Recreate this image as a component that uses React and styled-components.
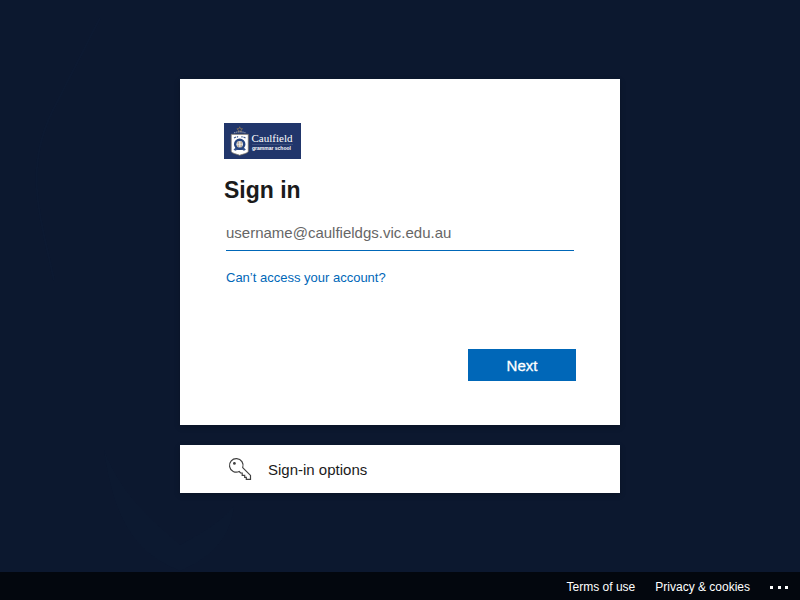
import React from "react";
import styled, { createGlobalStyle } from "styled-components";

const GlobalStyle = createGlobalStyle`
  *, *::before, *::after { box-sizing: border-box; }
  body {
    margin: 0;
    background: #0c182f;
    color: #1b1b1b;
    font-family: "Liberation Sans", Arial, sans-serif;
    font-size: 15px;
    line-height: 20px;
  }
`;

const Page = styled.div`
  position: relative;
  isolation: isolate;
  display: flex;
  flex-direction: column;
  min-height: 100vh;
`;

const Backdrop = styled.svg`
  position: absolute;
  inset: 0;
  z-index: -1;
  width: 100%;
  height: 100%;
`;

const Main = styled.main`
  flex: 1;
  display: flex;
  flex-direction: column;
  align-items: center;
  justify-content: center;
  gap: 20px;
`;

const Card = styled.form`
  display: flex;
  flex-direction: column;
  width: 100%;
  max-width: 440px;
  padding: 44px;
  background: #fff;
  box-shadow: 0 2px 6px rgba(0, 0, 0, 0.2);
`;

const Logo = styled.svg`
  display: block;
  width: 77px;
  height: 36px;
`;

const Title = styled.h1`
  margin: 17px 0 0;
  font-size: 23px;
  font-weight: 700;
  line-height: 28px;
`;

const Fields = styled.div`
  display: flex;
  flex-direction: column;
  align-items: flex-start;
  gap: 17px;
  margin-top: 11px;
  padding: 0 2px;
`;

const TextField = styled.input`
  width: 100%;
  height: 36px;
  padding: 0;
  border: 0;
  border-bottom: 1px solid #0067b8;
  border-radius: 0;
  outline: 0;
  background: transparent;
  color: inherit;
  font: inherit;
  &::placeholder { color: #666; opacity: 1; }
`;

const TextLink = styled.a`
  color: #0067b8;
  font-size: 13px;
  text-decoration: none;
  &:hover { text-decoration: underline; }
`;

const Actions = styled.div`
  display: flex;
  justify-content: flex-end;
  margin-top: 61px;
`;

const PrimaryButton = styled.button`
  min-width: 108px;
  height: 32px;
  padding: 2px 12px 0;
  border: 0;
  background: #0067b8;
  color: #fff;
  font: inherit;
  -webkit-text-stroke: 0.3px #fff;
  cursor: pointer;
  &:hover { background: #005da6; }
`;

const OptionsButton = styled.button`
  display: flex;
  align-items: center;
  gap: 16px;
  width: 100%;
  max-width: 440px;
  height: 48px;
  padding: 0 48px;
  border: 0;
  background: #fff;
  box-shadow: 0 2px 6px rgba(0, 0, 0, 0.2);
  color: inherit;
  font: inherit;
  text-align: left;
  cursor: pointer;
`;

const OptionsLabel = styled.span`
  padding-top: 2px;
`;

const Icon = styled.svg`
  display: block;
  width: 24px;
  height: 24px;
`;

const Footer = styled.footer`
  display: flex;
  align-items: center;
  justify-content: flex-end;
  gap: 20px;
  height: 28px;
  padding: 0 10px;
  background: rgba(0, 0, 0, 0.7);
`;

const FooterLink = styled.a`
  padding-top: 2px;
  color: #fff;
  font-size: 12px;
  text-decoration: none;
`;

const MoreButton = styled.button`
  display: flex;
  align-items: center;
  padding: 2px 0 0;
  border: 0;
  background: transparent;
  cursor: pointer;
`;

const Dots = styled.svg`
  display: block;
  width: 20px;
  height: 6px;
`;

function SchoolLogo() {
  return (
    <Logo viewBox="0 0 77 36" role="img" aria-label="Caulfield grammar school">
      <rect width="77" height="36" fill="#21366b" />
      <path d="m15.7 3.8.8 1.9 2 .1-1.6 1.3.6 2-1.8-1.1-1.7 1.1.5-2-1.6-1.3 2.1-.1z" fill="none" stroke="#8a7454" strokeWidth=".8" />
      <path d="M10 9.8q5.7-1.8 11.5 0" fill="none" stroke="#9ba4ba" strokeWidth="1.1" strokeDasharray="1.4 .7" />
      <path d="M7.2 11.3h17.1v17.2c-1.2 2.1-5.4 2.5-8.6 3.8-3.2-1.3-7.3-1.7-8.5-3.8z" fill="#fff" stroke="#756f66" strokeWidth=".8" />
      <path d="m10 15 2-1m7.5 0 2 1M13 13.5l1 .8m3.5 0 1-.8" stroke="#3d5689" strokeWidth="1.2" />
      <path d="m9.5 26.8 2-2.3h8.4l2 2.3-2 1-1.3-.7h-5.8l-1.3.7z" fill="#3c568d" />
      <circle cx="15.7" cy="21.3" r="4.5" fill="#dcdde1" stroke="#26447f" strokeWidth="2.5" />
      <path d="M14.2 18.5v5.7m3-5.7v5.7" stroke="#b5a184" strokeWidth="1.2" />
      <path d="M12.4 21.3h6.6" stroke="#f3f1eb" strokeWidth=".7" />
      <text x="27.5" y="19" fill="#fff" fontFamily="Liberation Serif, serif" fontSize="11">Caulfield</text>
      <path d="M28 21.5h41" stroke="#52658e" strokeWidth=".5" />
      <text x="28" y="27" fill="#fff" fontFamily="Liberation Sans, sans-serif" fontSize="5" fontWeight="700">grammar school</text>
    </Logo>
  );
}

export default function App() {
  return (
    <Page>
      <GlobalStyle />
      <Backdrop viewBox="0 0 800 600" preserveAspectRatio="xMidYMid slice" aria-hidden="true">
        <path d="M104 450c18 45 42 65 76 95 26-14 44-26 54-39-4 36-28 54-54 65-39-16-65-43-76-121z" fill="#1b3262" opacity=".03" />
        <path d="m100 18-48 94c-28 58-12 104 2 168" fill="none" stroke="#1b3262" strokeWidth="2" opacity=".04" />
      </Backdrop>
      <Main>
        <Card onSubmit={(event) => event.preventDefault()}>
          <SchoolLogo />
          <Title>Sign in</Title>
          <Fields>
            <TextField type="email" aria-label="Email address" placeholder="username@caulfieldgs.vic.edu.au" />
            <TextLink href="#recover">Can’t access your account?</TextLink>
          </Fields>
          <Actions>
            <PrimaryButton type="submit">Next</PrimaryButton>
          </Actions>
        </Card>
        <OptionsButton type="button">
          <Icon viewBox="0 0 24 24" fill="none" stroke="#404040" strokeWidth="1.2" aria-hidden="true">
            <path d="M14.7 10.6A6.8 6.8 0 1 0 11.2 14.5l1.4 1.5h1.6v2.3h2.5v2h1.6v2h4.2v-3.9z" />
            <circle cx="6.4" cy="6.4" r="1.4" fill="#404040" stroke="none" />
          </Icon>
          <OptionsLabel>Sign-in options</OptionsLabel>
        </OptionsButton>
      </Main>
      <Footer>
        <FooterLink href="#terms">Terms of use</FooterLink>
        <FooterLink href="#privacy">Privacy &amp; cookies</FooterLink>
        <MoreButton type="button" aria-label="More options">
          <Dots viewBox="0 0 20 6" fill="#fff" aria-hidden="true">
            <rect x="0" y="2" width="3" height="3" />
            <rect x="8" y="2" width="3" height="3" />
            <rect x="15" y="2" width="3" height="3" />
          </Dots>
        </MoreButton>
      </Footer>
    </Page>
  );
}
